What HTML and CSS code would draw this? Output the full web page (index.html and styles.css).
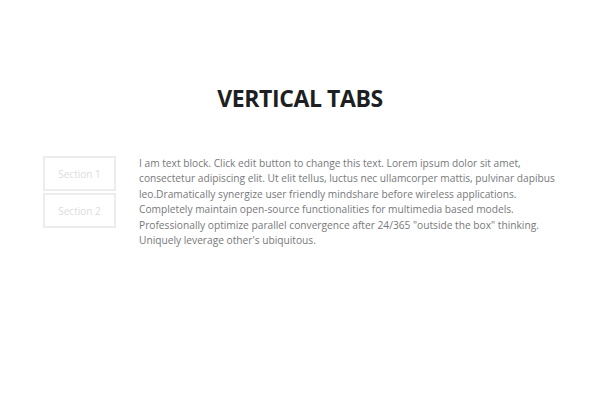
FILE: index.html
```html
<!DOCTYPE html>
<html>
<head>
<meta charset="utf-8">
<link rel="stylesheet" href="styles.css">
</head>
<body>
<div class="page">
  <h1 class="title">VERTICAL TABS</h1>
  <div class="tabs">
    <div class="tab-list">
      <div class="tab">Section 1</div>
      <div class="tab">Section 2</div>
    </div>
    <p class="content">I am text block. Click edit button to change this text. Lorem ipsum dolor sit amet,<br>consectetur adipiscing elit. Ut elit tellus, luctus nec ullamcorper mattis, pulvinar dapibus<br>leo.Dramatically synergize user friendly mindshare before wireless applications.<br>Completely maintain open-source functionalities for multimedia based models.<br>Professionally optimize parallel convergence after 24/365 "outside the box" thinking.<br>Uniquely leverage other's ubiquitous.</p>
  </div>
</div>
</body>
</html>
```
FILE: styles.css
```css
html, body {
  margin: 0;
  padding: 0;
  background: #ffffff;
}
.page {
  width: 600px;
  height: 400px;
  font-family: "Open Sans", "Noto Sans", sans-serif;
}
.title {
  margin: 0;
  padding-top: 83px;
  text-align: center;
  font-size: 23px;
  font-weight: 700;
  color: #1d1f22;
  line-height: 30px;
  letter-spacing: -0.4px;
}
.tabs {
  display: flex;
  padding: 43px 0 0 43px;
}
.tab-list {
  display: flex;
  flex-direction: column;
  gap: 2px;
  width: 73px;
  flex: none;
}
.tab {
  box-sizing: border-box;
  height: 35px;
  border: 2px solid #ececec;
  display: flex;
  align-items: center;
  justify-content: center;
  font-size: 10px;
  color: #dcdcdc;
}
.content {
  margin: 0 0 0 23px;
  font-size: 10.2px;
  line-height: 15.4px;
  color: #77787b;
  white-space: nowrap;
}
```
